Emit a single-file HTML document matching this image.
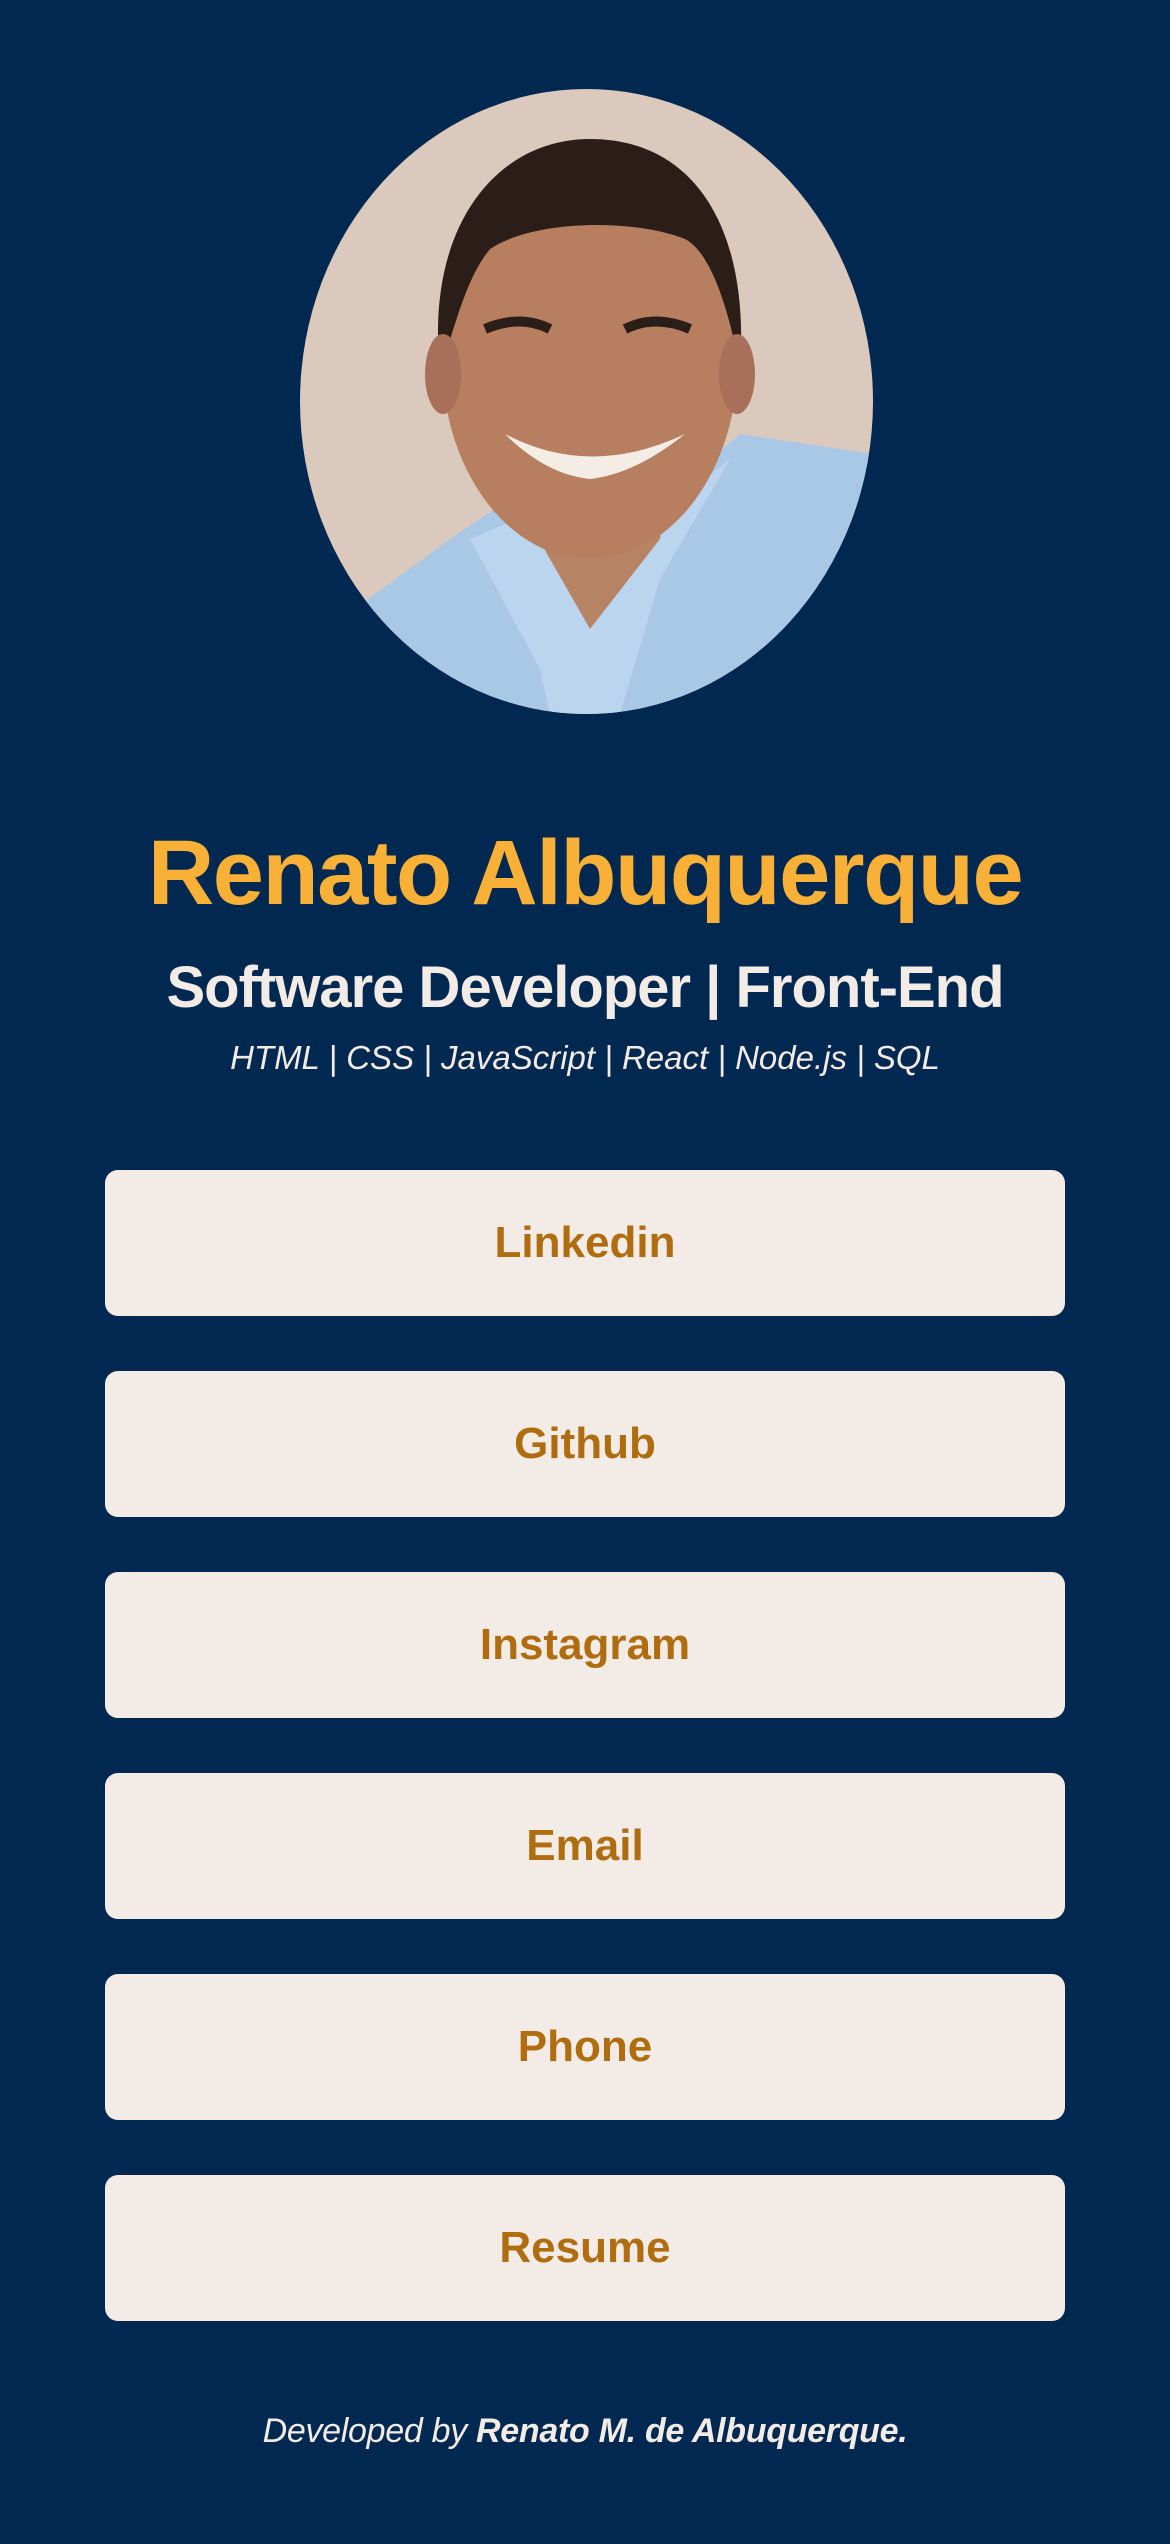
<!DOCTYPE html>
<html><head><meta charset="utf-8"><style>
html,body{margin:0;padding:0}
body{width:1170px;height:2544px;background:#002850;font-family:"Liberation Sans",sans-serif;position:relative;overflow:hidden}
.t{position:absolute;left:0;width:1170px;text-align:center;white-space:nowrap}
.btn{position:absolute;left:105px;width:960px;height:146px;background:#f3ebe6;border-radius:13px;color:#b06d10;font-weight:bold;font-size:44px;line-height:146px;text-align:center}
</style></head><body>
<svg style="position:absolute;left:300px;top:89px" width="573" height="625" viewBox="0 0 573 625">
<defs><clipPath id="c"><ellipse cx="286.5" cy="312.5" rx="286.5" ry="312.5"/></clipPath></defs>
<g clip-path="url(#c)">
<rect width="573" height="625" fill="#dcc9bd"/>
<path d="M0 560 L150 450 L210 410 L330 440 L440 345 L573 365 L573 625 L0 625Z" fill="#a9c8e6"/>
<path d="M170 450 L240 580 L250 625 L320 625 L360 490 L430 370 L330 450 L240 420Z" fill="#bcd5ee"/>
<path d="M210 400 L290 540 L360 450 L370 370 L220 350Z" fill="#b78365"/>
<ellipse cx="290" cy="270" rx="148" ry="200" fill="#b77e5f"/>
<path d="M140 280 C125 140 195 50 290 50 C395 50 450 140 440 280 C425 200 405 160 385 150 C335 130 235 130 190 160 C165 190 155 240 140 280Z" fill="#2b1e18"/>
<ellipse cx="143" cy="285" rx="18" ry="40" fill="#a8705a"/>
<ellipse cx="437" cy="285" rx="18" ry="40" fill="#a8705a"/>
<path d="M205 345 Q290 390 385 345 Q335 385 290 390 Q245 385 205 345Z" fill="#f4ede6"/>
<path d="M185 240 Q220 225 250 240" stroke="#2b1e18" stroke-width="10" fill="none"/>
<path d="M325 240 Q355 225 390 240" stroke="#2b1e18" stroke-width="10" fill="none"/>
</g></svg>
<div class="t" style="top:820px;font-size:92px;font-weight:bold;color:#f9b037;letter-spacing:-1.5px;line-height:106px">Renato Albuquerque</div>
<div class="t" style="top:955px;font-size:58px;font-weight:bold;color:#f3ebe6;line-height:66px;letter-spacing:-1px">Software Developer | Front-End</div>
<div class="t" style="top:1039px;font-size:33px;font-style:italic;color:#f3ebe6;line-height:38px">HTML | CSS | JavaScript | React | Node.js | SQL</div>
<div class="btn" style="top:1170px">Linkedin</div>
<div class="btn" style="top:1371px">Github</div>
<div class="btn" style="top:1572px">Instagram</div>
<div class="btn" style="top:1773px">Email</div>
<div class="btn" style="top:1974px">Phone</div>
<div class="btn" style="top:2175px">Resume</div>
<div class="t" style="top:2411px;font-size:34px;font-style:italic;color:#f3ebe6;line-height:40px;letter-spacing:-0.3px">Developed by <b>Renato M. de Albuquerque.</b></div>
</body></html>
